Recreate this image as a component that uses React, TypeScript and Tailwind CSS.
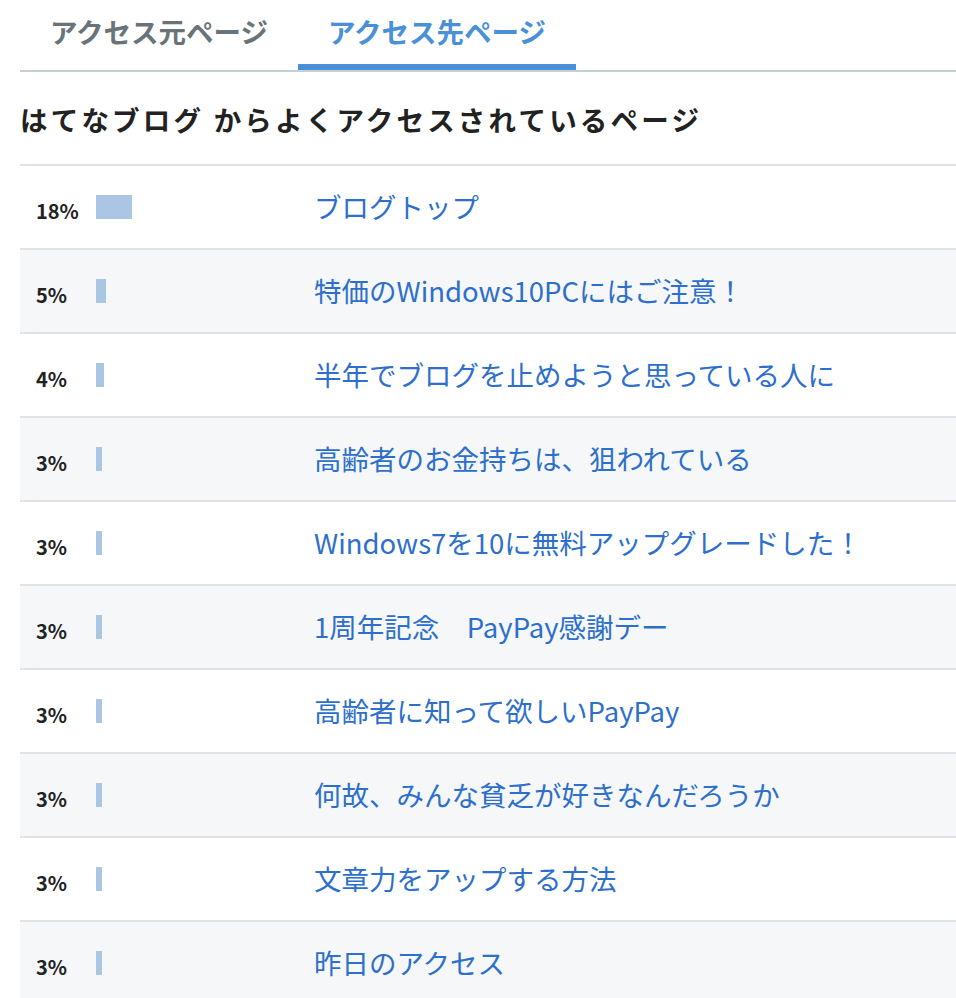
import React from "react";

const rows: { pct: number; title: string }[] = [
  { pct: 18, title: "ブログトップ" },
  { pct: 5, title: "特価のWindows10PCにはご注意！" },
  { pct: 4, title: "半年でブログを止めようと思っている人に" },
  { pct: 3, title: "高齢者のお金持ちは、狙われている" },
  { pct: 3, title: "Windows7を10に無料アップグレードした！" },
  { pct: 3, title: "1周年記念　PayPay感謝デー" },
  { pct: 3, title: "高齢者に知って欲しいPayPay" },
  { pct: 3, title: "何故、みんな貧乏が好きなんだろうか" },
  { pct: 3, title: "文章力をアップする方法" },
  { pct: 3, title: "昨日のアクセス" },
];

export default function App() {
  return (
    <div
      className="w-[956px] h-[998px] overflow-hidden bg-white pl-[20px]"
      style={{ fontFamily: '"Noto Sans CJK JP", "Noto Sans", sans-serif' }}
    >
      <div className="flex border-b-2 border-[#c5d0d4]">
        <div className="w-[278px] h-[70px] flex items-center justify-center text-[27.5px] font-bold text-[#6a7378] border-b-[6px] border-transparent">
          アクセス元ページ
        </div>
        <div className="w-[278px] h-[70px] flex items-center justify-center text-[27.5px] font-bold text-[#4a90d9] border-b-[6px] border-[#4a90d9]">
          アクセス先ページ
        </div>
      </div>
      <div className="h-[94px] pt-[4px] flex items-center border-b-2 border-[#dde3e6] text-[27.5px] tracking-[3.2px] font-bold text-[#222]">
        はてなブログ からよくアクセスされているページ
      </div>
      {rows.map((r, i) => (
        <div
          key={i}
          className={`h-[84px] flex items-center border-b-2 border-[#dde3e6] ${
            i % 2 === 1 ? "bg-[#f5f7f9]" : "bg-white"
          }`}
        >
          <div className="w-[296px] shrink-0 flex items-center pl-[16px]">
            <span className="w-[60px] mt-[8px] text-[20px] font-bold text-[#222]">
              {r.pct}%
            </span>
            <span
              className="h-[24px] bg-[#abc6e5]"
              style={{ width: r.pct * 2 }}
            />
          </div>
          <a className="-ml-[2px] text-[27.5px] text-[#2d6fcb] whitespace-nowrap">{r.title}</a>
        </div>
      ))}
    </div>
  );
}
